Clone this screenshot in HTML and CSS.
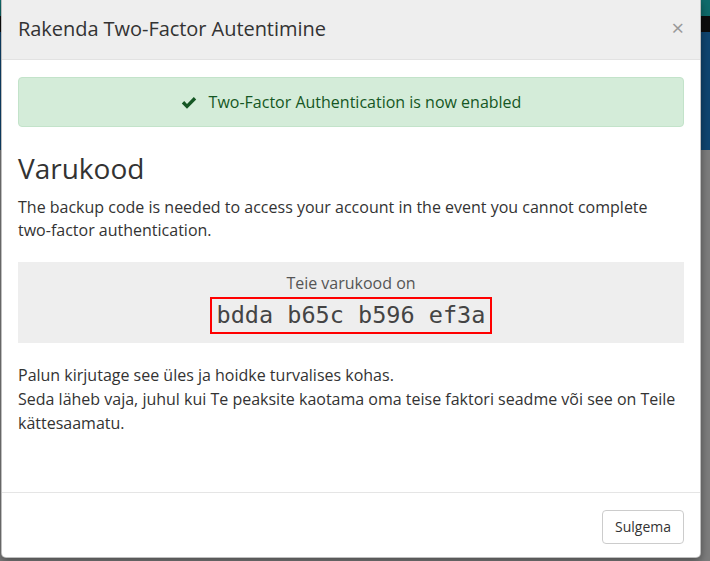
FILE: index.html
```html
<!DOCTYPE html>
<html lang="et">
<head>
<meta charset="utf-8">
<title>Rakenda Two-Factor Autentimine</title>
<link rel="stylesheet" href="styles.css">
</head>
<body>
<div class="backdrop">
  <div class="modal">
    <div class="modal-header">
      <h4 class="modal-title">Rakenda Two-Factor Autentimine</h4>
      <span class="close">×</span>
    </div>
    <div class="modal-body">
      <div class="alert">
        <svg class="check" viewBox="0 0 16 14" width="16" height="14"><path d="M0.8 7.5 L3.2 5.1 L6 7.9 L12.8 1.1 L15.2 3.5 L6 12.7 Z" fill="#155724"/></svg>
        <span>Two-Factor Authentication is now enabled</span>
      </div>
      <h2 class="heading">Varukood</h2>
      <p class="intro">The backup code is needed to access your account in the event you cannot complete two-factor authentication.</p>
      <div class="code-box">
        <div class="code-label">Teie varukood on</div>
        <div class="code">bdda b65c b596 ef3a</div>
      </div>
      <p class="note">Palun kirjutage see üles ja hoidke turvalises kohas.<br>Seda läheb vaja, juhul kui Te peaksite kaotama oma teise faktori seadme või see on Teile kättesaamatu.</p>
    </div>
    <div class="modal-footer">
      <button class="btn">Sulgema</button>
    </div>
  </div>
</div>
</body>
</html>
```
FILE: styles.css
```css
* { box-sizing: border-box; }
html, body { margin: 0; padding: 0; }
body {
  width: 710px;
  height: 561px;
  overflow: hidden;
  font-family: "Open Sans", "Noto Sans", sans-serif;
  color: #333;
}
.backdrop {
  width: 710px;
  height: 561px;
  background:
    linear-gradient(to bottom,
      #0f6b6b 0, #0f6b6b 16px,
      #0d0d0d 16px, #0d0d0d 32px,
      #0f4570 32px, #0f4570 150px,
      #7d7d7d 150px, #7d7d7d 100%);
  padding: 0 9px 0 1px;
}
.modal {
  width: 700px;
  height: 558px;
  background: #fff;
  border: 1px solid rgba(0,0,0,0.25);
  border-top: none;
  border-radius: 0 0 5px 5px;
  display: flex;
  flex-direction: column;
  box-shadow: 0 3px 9px rgba(0,0,0,0.4);
}
.modal-header {
  height: 60px;
  background: #eeeeee;
  border-bottom: 1px solid #e2e2e2;
  display: flex;
  align-items: center;
  justify-content: space-between;
  padding: 0 16px 2px 16px;
}
.modal-title {
  margin: 0;
  font-size: 20px;
  font-weight: 400;
  color: #333;
  letter-spacing: -0.05px;
}
.close {
  font-size: 22px;
  color: #999;
  line-height: 1;
  margin-top: -4px;
}
.modal-body {
  flex: 1;
  padding: 17px 16px 0 16px;
}
.alert {
  height: 50px;
  background: #d4ecd9;
  border: 1px solid #c3e3ca;
  border-radius: 4px;
  color: #155724;
  font-size: 16px;
  display: flex;
  align-items: center;
  justify-content: center;
  gap: 12px;
}
.check { margin-top: 1px; }
.heading {
  margin: 23px 0 0;
  font-size: 28px;
  font-weight: 400;
  line-height: 36px;
  color: #333;
}
.intro {
  margin: 10px 0 0;
  font-size: 16px;
  line-height: 23px;
}
.code-box {
  margin-top: 20px;
  background: #eeeeee;
  height: 81px;
  display: flex;
  flex-direction: column;
  align-items: center;
  padding-top: 10px;
}
.code-label {
  font-size: 16px;
  line-height: 22px;
  color: #555;
}
.code {
  margin-top: 3px;
  border: 2px solid #ff0000;
  font-family: "DejaVu Sans Mono", monospace;
  font-size: 23.5px;
  line-height: 33px;
  padding: 0 5px;
  color: #444;
}
.note {
  margin: 20px 0 0;
  font-size: 16px;
  line-height: 24px;
}
.modal-footer {
  height: 65px;
  border-top: 1px solid #e5e5e5;
  display: flex;
  align-items: center;
  justify-content: flex-end;
  padding: 3px 16px 0 0;
}
.btn {
  font-family: "Open Sans", "Noto Sans", sans-serif;
  font-size: 14px;
  color: #333;
  background: #fff;
  border: 1px solid #ccc;
  border-radius: 4px;
  height: 34px;
  padding: 0 12px;
}
```
